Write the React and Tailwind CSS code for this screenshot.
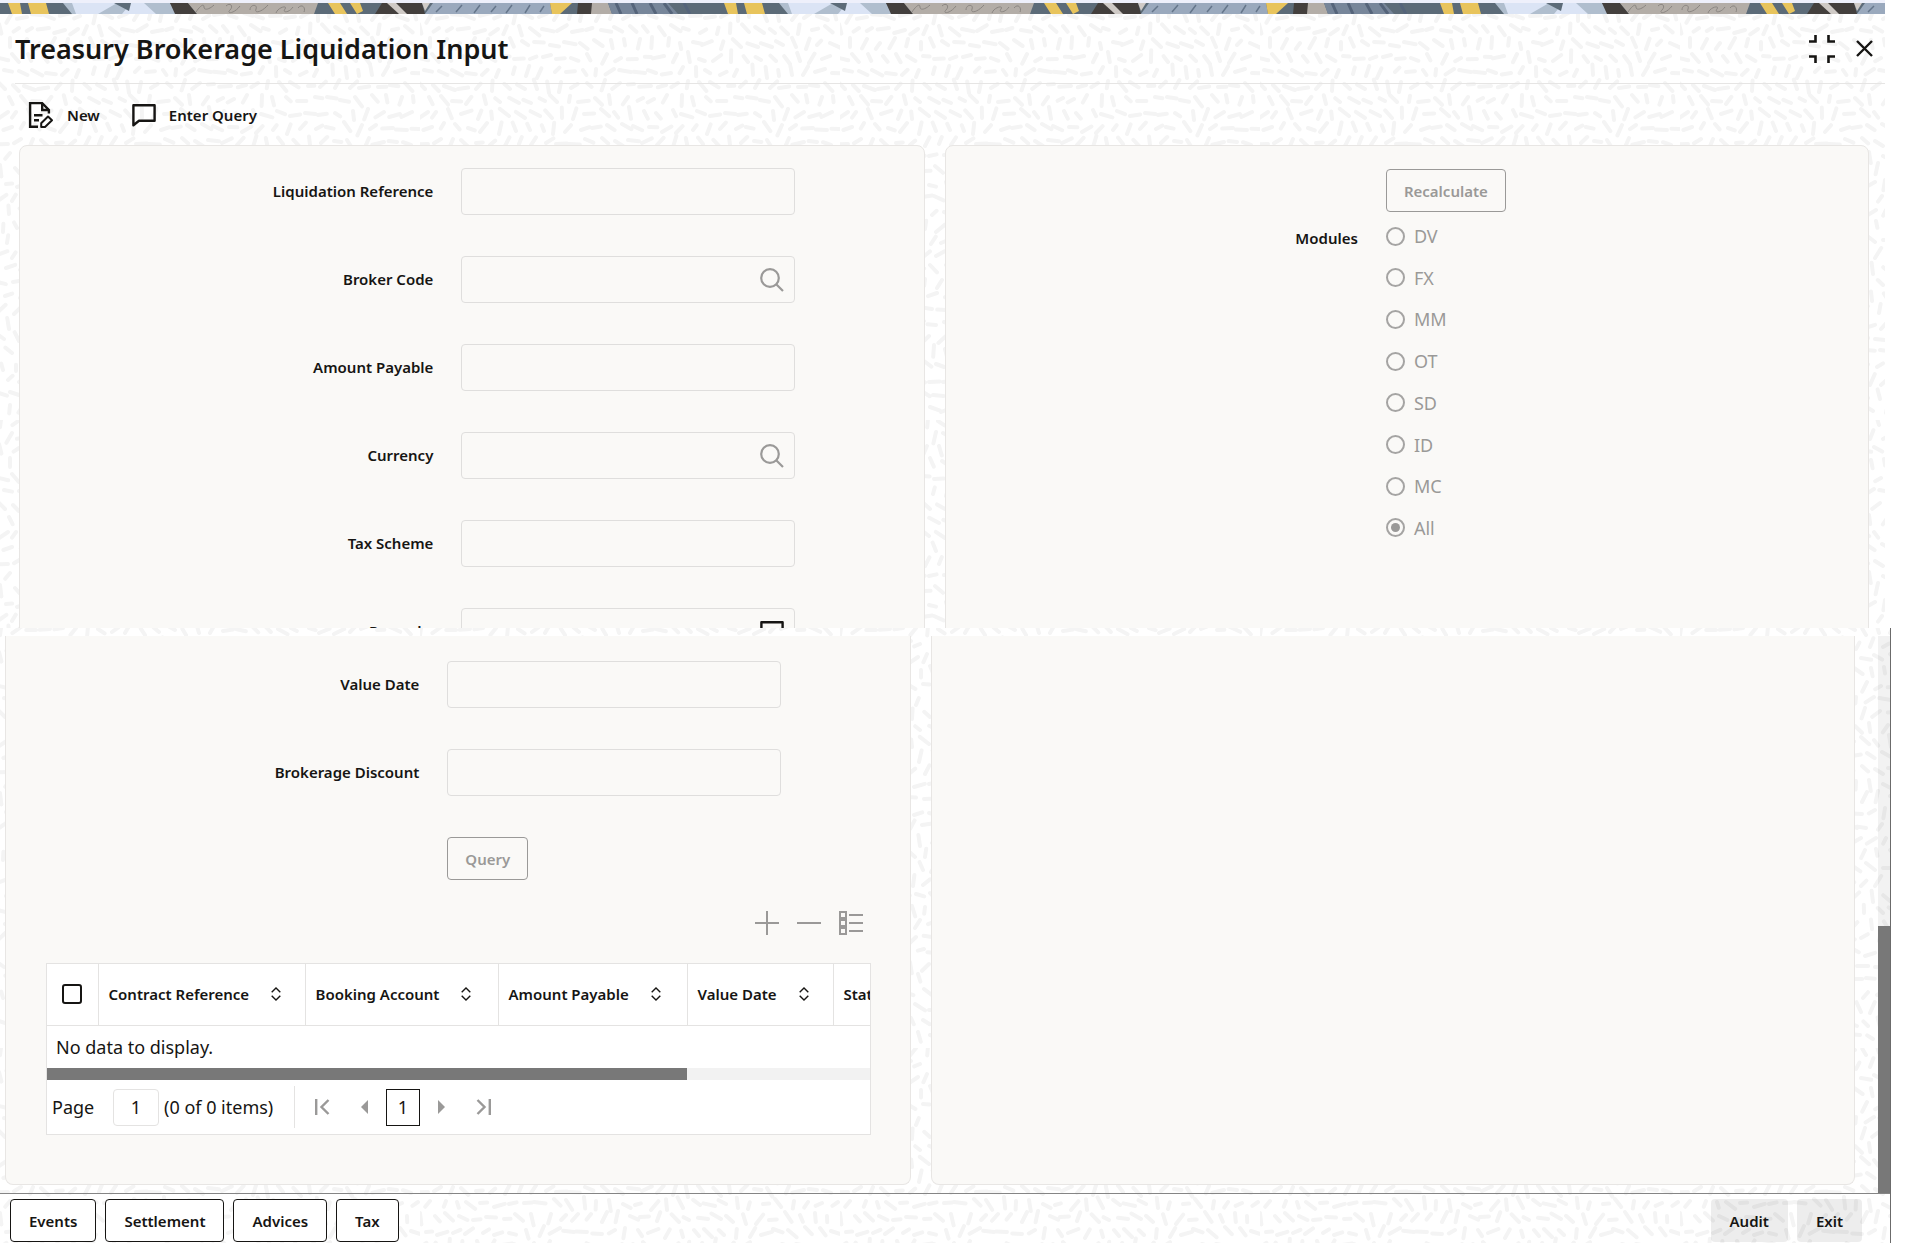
import React from "react";

const modules = ["DV", "FX", "MM", "OT", "SD", "ID", "MC", "All"];

const topFields = [
  { id: "liquidationReference", label: "Liquidation Reference" },
  { id: "brokerCode", label: "Broker Code", icon: "search" },
  { id: "amountPayable", label: "Amount Payable" },
  { id: "currency", label: "Currency", icon: "search" },
  { id: "taxScheme", label: "Tax Scheme" },
  { id: "remarks", label: "Remarks", icon: "comment" },
];

const bottomFields = [
  { id: "valueDate", label: "Value Date" },
  { id: "brokerageDiscount", label: "Brokerage Discount" },
];

const columns = [
  { label: "Contract Reference", width: "w-[207px]" },
  { label: "Booking Account", width: "w-[193px]" },
  { label: "Amount Payable", width: "w-[189px]" },
  { label: "Value Date", width: "w-[146px]" },
  { label: "Status", width: "w-[271px]" },
];

// Repeating tile of short strokes that follow a smooth, periodic flow field.
function buildTexture() {
  const size = 420;
  const step = 14;
  const turn = (Math.PI * 2) / size;
  let seed = 7;
  const rand = () => {
    seed = (seed * 16807) % 2147483647;
    return seed / 2147483647;
  };
  let d = "";
  for (let row = 0; row < size / step; row++) {
    for (let col = 0; col < size / step; col++) {
      const x = col * step + (row % 2) * 7 + rand() * 4;
      const y = row * step + rand() * 4;
      const angle =
        1.7 * Math.sin(turn * (2 * x + y)) +
        1.5 * Math.cos(turn * (3 * y - x)) +
        rand() * 0.5;
      const len = 3 + rand() * 3;
      const dx = Math.round(Math.cos(angle) * len * 10) / 10;
      const dy = Math.round(Math.sin(angle) * len * 10) / 10;
      d += `M${Math.round(x - dx)} ${Math.round(y - dy)}l${dx * 2} ${dy * 2}`;
    }
  }
  const svg = `<svg xmlns="http://www.w3.org/2000/svg" width="${size}" height="${size}"><path d="${d}" stroke="#f4f4f4" stroke-width="4" stroke-linecap="round" fill="none"/></svg>`;
  return `url("data:image/svg+xml,${encodeURIComponent(svg)}")`;
}

const texture = buildTexture();

function Banner() {
  return (
    <svg className="block h-[11px] w-full" aria-hidden="true">
      <defs>
        <pattern id="banner" width="716" height="11" patternUnits="userSpaceOnUse">
          <rect width="716" height="11" fill="#5c6b78" />
          <path d="M8 0H20L22 11H12ZM28 0H46L49 11H31Z" fill="#e8c45c" />
          <path d="M63 0H170L178 11H72Z" fill="#b0bece" />
          <path d="M72 0H117L98 11H76ZM131 0H144L156 11H122Z" fill="#dbe4f5" />
          <path d="M114 0H131L129 8Z" fill="#5c6b78" />
          <path d="M170 0H188L197 11H175Z" fill="#433f3d" />
          <path d="M188 0H318L314 11H197Z" fill="#b3ada7" />
          <path
            d="M196 9c4-6 8-9 8-5s6 2 10-2M226 3c4-4 8 0 4 4s4 4 10-4M250 7c0-6 8-6 6-1s6 3 12-4M276 10c2-6 12-8 9-4s4 4 8-2M298 5c4-5 8 0 6 4"
            fill="none"
            stroke="#8a8581"
            strokeWidth="1"
          />
          <path d="M328 0H340L347 11H335ZM350 0H360L363 8L357 11Z" fill="#e8c45c" />
          <path d="M382 0H422L425 11H375Z" fill="#433f3d" />
          <path d="M387 0H396L407 11H399Z" fill="#cfcac6" />
          <path d="M422 0H430L425 8Z" fill="#cfcac6" />
          <path d="M433 0H550L552 11H425Z" fill="#9aa9bd" />
          <path
            d="M442 3l-6 6M462 2l-6 7M480 2l-6 8M496 3l-5 6M512 2l-6 8M530 2l-5 8M544 3l-4 6"
            stroke="#65768b"
            strokeWidth="1.5"
          />
          <path d="M550 0H572L560 11H552Z" fill="#e8c45c" />
          <path d="M578 0H592V11H577Z" fill="#433f3d" />
          <path d="M592 0H608L612 11H591Z" fill="#b3ada7" />
          <path d="M608 0H668L678 11H612Z" fill="#77869a" />
          <path
            d="M616 0l5 11M632 0l5 11M650 0l6 11M664 0l8 11M684 0l6 11"
            stroke="#55647a"
            strokeWidth="3"
          />
        </pattern>
      </defs>
      <rect width="100%" height="11" fill="url(#banner)" />
    </svg>
  );
}

function SearchIcon() {
  return (
    <svg width="24" height="24" viewBox="0 0 24 24" fill="none" stroke="#9a9998" strokeWidth="2.2">
      <circle cx="10" cy="10" r="8.8" />
      <path d="M16.2 16.2L23 23" />
    </svg>
  );
}

function CommentIcon() {
  return (
    <svg width="24" height="24" viewBox="0 0 24 24" fill="none" stroke="#161513" strokeWidth="2.4" strokeLinejoin="round">
      <path d="M1.4 2.2H22.6V17.8H7L1.4 22.2Z" />
    </svg>
  );
}

function NewIcon() {
  return (
    <svg width="26" height="28" viewBox="0 0 26 28" fill="none" stroke="#161513" strokeWidth="2.4">
      <path d="M10 25.8H2.1V2.1H14.2L20.9 9V12.5" />
      <path d="M14.2 2.1V9H20.9" />
      <path d="M6 14.2H14.5M6 19.2H11" />
      <path d="M20 15.5L24 19.2L17 26H13.2V22.2Z" strokeWidth="2" strokeLinejoin="round" />
    </svg>
  );
}

function SortIcon() {
  return (
    <svg width="10" height="14" viewBox="0 0 10 14" fill="none" stroke="#161513" strokeWidth="1.4">
      <path d="M0.7 5.2L5 1L9.3 5.2M0.7 8.8L5 13L9.3 8.8" />
    </svg>
  );
}

function Field({ id, label, icon }) {
  return (
    <>
      <label htmlFor={id} className="pb-0.5 text-right text-[15px] leading-5 font-semibold">
        {label}
      </label>
      <div className="flex h-[47px] w-[334px] items-center rounded border border-[#dfdedd] pr-[10px]">
        <input id={id} type="text" className="h-full min-w-0 flex-1 bg-transparent px-3 text-lg outline-none" />
        {icon === "search" && (
          <button type="button" aria-label={`Search ${label}`}>
            <SearchIcon />
          </button>
        )}
        {icon === "comment" && (
          <button type="button" aria-label={`Edit ${label}`}>
            <CommentIcon />
          </button>
        )}
      </div>
    </>
  );
}

function DisabledButton({ children }) {
  return (
    <button
      type="button"
      disabled
      className="h-[43px] rounded border border-[#9a9998] px-[17px] text-[15px] leading-5 font-semibold text-[#9a9998]"
    >
      {children}
    </button>
  );
}

function FooterButton({ children }) {
  return (
    <button type="button" className="h-[43px] rounded border border-[#161513] bg-white px-[18px] text-[15px] leading-5 font-semibold">
      {children}
    </button>
  );
}

function PlainButton({ children }) {
  return (
    <button type="button" className="h-[43px] rounded bg-black/[0.07] px-[19px] text-[15px] leading-5 font-semibold">
      {children}
    </button>
  );
}

function ContractsTable() {
  return (
    <div className="mr-[39px] ml-10 border border-[#e4e3e2] bg-white">
      <div className="overflow-hidden">
        <table className="w-[1057px] table-fixed border-collapse">
          <thead>
            <tr className="h-[61px] border-b border-[#e4e3e2]">
              <th className="w-[51px] border-r border-[#e4e3e2]">
                <input
                  type="checkbox"
                  aria-label="Select all rows"
                  className="mx-auto block size-5 appearance-none rounded-[3px] border-2 border-[#161513]"
                />
              </th>
              {columns.map((c) => (
                <th key={c.label} className={`${c.width} border-r border-[#e4e3e2] pl-[10px] text-left`}>
                  <span className="flex items-center gap-[22px] text-[15px] leading-5 font-semibold whitespace-nowrap">
                    {c.label}
                    <SortIcon />
                  </span>
                </th>
              ))}
            </tr>
          </thead>
          <tbody>
            <tr className="h-[43px]">
              <td colSpan={6} className="pl-[9px] text-lg leading-6">
                No data to display.
              </td>
            </tr>
          </tbody>
        </table>
      </div>
      <div className="h-3 bg-[#f2f2f2]">
        <div className="h-full w-[640px] bg-[#787878]" />
      </div>
      <div className="flex h-[54px] items-center text-lg leading-6">
        <label htmlFor="page" className="w-[66px] pl-[5px]">
          Page
        </label>
        <input
          id="page"
          type="text"
          defaultValue="1"
          className="h-[37px] w-[46px] rounded border border-[#e4e3e2] text-center"
        />
        <span className="w-[135px] pl-[5px] whitespace-nowrap">(0 of 0 items)</span>
        <div className="flex h-[42px] items-center border-l border-[#e4e3e2] pl-5 text-[#9a9998]">
          <button type="button" aria-label="First page">
            <svg width="15" height="16" viewBox="0 0 15 16" fill="none" stroke="currentColor" strokeWidth="2.4">
              <path d="M1.2 0V16M13.5 1L6.5 8L13.5 15" />
            </svg>
          </button>
          <button type="button" aria-label="Previous page" className="ml-[31px]">
            <svg width="7" height="14" viewBox="0 0 7 14" fill="currentColor">
              <path d="M7 0V14L0 7Z" />
            </svg>
          </button>
          <button type="button" className="mx-[18px] h-[37px] w-[34px] border border-[#161513] text-[#161513]">
            1
          </button>
          <button type="button" aria-label="Next page">
            <svg width="7" height="14" viewBox="0 0 7 14" fill="currentColor">
              <path d="M0 0V14L7 7Z" />
            </svg>
          </button>
          <button type="button" aria-label="Last page" className="ml-[31px]">
            <svg width="15" height="16" viewBox="0 0 15 16" fill="none" stroke="currentColor" strokeWidth="2.4">
              <path d="M13.8 0V16M1.5 1L8.5 8L1.5 15" />
            </svg>
          </button>
        </div>
      </div>
    </div>
  );
}

export default function App() {
  return (
    <div className="flex min-h-screen flex-col bg-white font-['Noto_Sans','Open_Sans',sans-serif] text-[#161513]">
      <section className="mr-[21px] h-[628px] overflow-hidden" style={{ backgroundImage: texture }}>
        <div className="h-[3px] bg-[#eef0fb]" />
        <Banner />
        <header className="ml-[15px] flex h-[70px] items-center justify-between border-b border-[#e6e5e4] pr-3">
          <h1 className="text-[27px] leading-8 font-semibold">Treasury Brokerage Liquidation Input</h1>
          <div className="flex items-center gap-[21px]">
            <button type="button" aria-label="Restore window">
              <svg width="26" height="28" viewBox="0 0 26 28" fill="none" stroke="#161513" strokeWidth="2.6">
                <path d="M0 6.5H6.5V0M26 6.5H19.5V0M0 21.5H6.5V28M26 21.5H19.5V28" />
              </svg>
            </button>
            <button type="button" aria-label="Close">
              <svg width="17" height="17" viewBox="0 0 17 17" fill="none" stroke="#161513" strokeWidth="2.4">
                <path d="M1 1L16 16M16 1L1 16" />
              </svg>
            </button>
          </div>
        </header>
        <div className="flex h-[61px] items-center gap-8 pl-7 text-[15px] leading-5 font-semibold">
          <button type="button" className="flex items-center gap-[13px]">
            <NewIcon />
            New
          </button>
          <button type="button" className="flex items-center gap-[13px]">
            <CommentIcon />
            Enter Query
          </button>
        </div>
        <div className="flex gap-5 pr-4 pl-[19px]">
          <div className="h-[560px] flex-[49] rounded-lg border border-[#e8e6e4] bg-[#faf9f7] pt-[22px]">
            <div className="grid grid-cols-[413fr_462fr] items-center gap-x-7 gap-y-[41px]">
              {topFields.map((f) => (
                <Field key={f.id} {...f} />
              ))}
            </div>
          </div>
          <div className="h-[560px] flex-[50] rounded-lg border border-[#e8e6e4] bg-[#faf9f7] pt-[23px]">
            <div className="grid grid-cols-[412fr_482fr] gap-x-7">
              <div className="col-start-2">
                <DisabledButton>Recalculate</DisabledButton>
              </div>
              <span id="modules" className="mt-4 text-right text-[15px] leading-5 font-semibold">
                Modules
              </span>
              <div role="radiogroup" aria-labelledby="modules" className="mt-3 flex h-[316px] flex-col justify-between">
                {modules.map((m) => (
                  <label key={m} className="flex items-center gap-[9px] text-lg leading-6 text-[#9a9998]">
                    <input
                      type="radio"
                      name="module"
                      disabled
                      defaultChecked={m === "All"}
                      className="grid size-[19px] appearance-none place-items-center rounded-full border-2 border-[#a5a4a3] before:size-[9px] before:rounded-full checked:before:bg-[#9a9998]"
                    />
                    {m}
                  </label>
                ))}
              </div>
            </div>
          </div>
        </div>
      </section>

      <section
        className="mr-[15px] flex flex-1 flex-col border-r border-[#6b6b6b] pt-2"
        style={{ backgroundImage: texture }}
      >
        <div className="flex flex-1">
          <div className="flex flex-1 gap-5 pr-[23px] pb-2 pl-[5px]">
            <div className="min-w-0 flex-[49] rounded-b-lg border border-t-0 border-[#e8e6e4] bg-[#faf9f7] pt-[25px]">
              <div className="grid grid-cols-[413fr_462fr] items-center gap-x-7 gap-y-[41px]">
                {bottomFields.map((f) => (
                  <Field key={f.id} {...f} />
                ))}
                <div className="col-start-2">
                  <DisabledButton>Query</DisabledButton>
                </div>
              </div>
              <div className="mt-[31px] mr-[47px] mb-7 flex justify-end gap-[18px] text-[#9a9998]">
                <button type="button" aria-label="Add row">
                  <svg width="24" height="24" viewBox="0 0 24 24" stroke="currentColor" strokeWidth="2">
                    <path d="M12 0V24M0 12H24" />
                  </svg>
                </button>
                <button type="button" aria-label="Remove row">
                  <svg width="24" height="24" viewBox="0 0 24 24" stroke="currentColor" strokeWidth="2">
                    <path d="M0 12H24" />
                  </svg>
                </button>
                <button type="button" aria-label="Single record view">
                  <svg width="24" height="24" viewBox="0 0 24 24" fill="none" stroke="currentColor" strokeWidth="2">
                    <path d="M1 1H7V7H1ZM1 9H7V15H1ZM1 17H7V23H1Z" />
                    <path d="M10 4H24M10 12H24M10 20H24" />
                  </svg>
                </button>
              </div>
              <ContractsTable />
            </div>
            <div className="flex-[50] rounded-b-lg border border-t-0 border-[#e8e6e4] bg-[#faf9f7]" />
          </div>
          <div className="flex w-3 flex-col justify-end bg-black/[0.05]">
            <div className="h-[48%] bg-[#787878]" />
          </div>
        </div>
        <footer className="flex items-center justify-between border-t border-[#858585] pt-[5px] pr-7 pb-px pl-[10px]">
          <div className="flex gap-[9px]">
            <FooterButton>Events</FooterButton>
            <FooterButton>Settlement</FooterButton>
            <FooterButton>Advices</FooterButton>
            <FooterButton>Tax</FooterButton>
          </div>
          <div className="flex gap-[9px]">
            <PlainButton>Audit</PlainButton>
            <PlainButton>Exit</PlainButton>
          </div>
        </footer>
      </section>
    </div>
  );
}
